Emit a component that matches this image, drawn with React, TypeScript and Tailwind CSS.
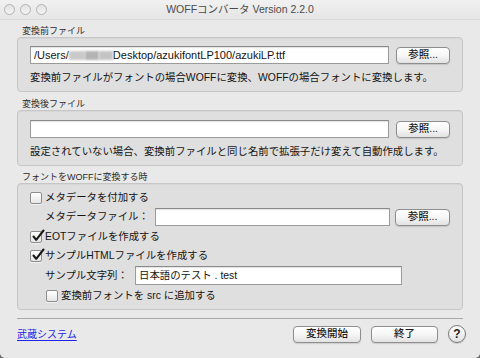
import React from "react";

const font = { fontFamily: '"Liberation Sans", "Noto Sans CJK JP", sans-serif' };

function Check({ checked }: { checked?: boolean }) {
  return (
    <span className="relative inline-block h-[12px] w-[12px] shrink-0 rounded-[2px] border border-[#8c8c8c] bg-gradient-to-b from-white to-[#e6e6e6] shadow-[0_1px_0_rgba(255,255,255,0.6)]">
      {checked ? (
        <svg
          className="absolute -top-[3px] left-[0px]"
          width="14"
          height="14"
          viewBox="0 0 14 14"
        >
          <path
            d="M2.5 7.5 L5.2 10.8 L12.5 1.5"
            fill="none"
            stroke="#1a1a1a"
            strokeWidth="2.1"
            strokeLinecap="round"
            strokeLinejoin="round"
          />
        </svg>
      ) : null}
    </span>
  );
}

function PushButton({ label, className }: { label: string; className?: string }) {
  return (
    <div
      className={
        "flex h-[17px] items-center justify-center rounded-[4px] border border-[#8e8e8e] bg-gradient-to-b from-white via-[#f6f6f6] to-[#e2e2e2] text-[10.5px] font-medium text-[#1b1b1b] shadow-[0_1px_1px_rgba(0,0,0,0.12)] " +
        (className ?? "")
      }
    >
      {label}
    </div>
  );
}

function Field({ children, className }: { children?: React.ReactNode; className?: string }) {
  return (
    <div
      className={
        "flex h-[18px] items-center overflow-hidden border border-[#9b9b9b] border-t-[#8a8a8a] bg-white px-[3px] shadow-[inset_0_1px_1px_rgba(0,0,0,0.12)] " +
        (className ?? "")
      }
    >
      {children}
    </div>
  );
}

function GroupLabel({ text, mt }: { text: string; mt: string }) {
  return (
    <div className={"h-[12px] pl-[5px] text-[9px] leading-[12px] text-[#2a2a2a] " + mt}>{text}</div>
  );
}

function Box({ children, className }: { children: React.ReactNode; className?: string }) {
  return (
    <div
      className={
        "rounded-[4px] border border-[#c6c6c6] bg-[#dfdfdf] px-[12px] shadow-[inset_0_1px_1px_rgba(0,0,0,0.04)] " +
        (className ?? "")
      }
    >
      {children}
    </div>
  );
}

export default function App() {
  return (
    <div className="h-[358px] w-[480px] bg-[#6b6b6b]" style={font}>
      <div className="flex h-[358px] flex-col overflow-hidden rounded-b-[5px] bg-[#e9e9e9] text-[#141414]">
        {/* title bar */}
        <div className="relative flex h-[20px] shrink-0 items-center justify-center border-b border-[#dcdcdc] bg-gradient-to-b from-[#f1f1f1] to-[#e5e5e5]">
          <div className="absolute left-[4px] top-[4px] flex gap-[5px]">
            <span className="h-[11px] w-[11px] rounded-full border border-[#b3b3b3] bg-gradient-to-b from-[#e2e2e2] to-[#f4f4f4]" />
            <span className="h-[11px] w-[11px] rounded-full border border-[#b3b3b3] bg-gradient-to-b from-[#e2e2e2] to-[#f4f4f4]" />
            <span className="h-[11px] w-[11px] rounded-full border border-[#b3b3b3] bg-gradient-to-b from-[#e2e2e2] to-[#f4f4f4]" />
          </div>
          <div className="text-[10.5px] text-[#4b4b4b]">WOFFコンバータ Version 2.2.0</div>
        </div>

        <div className="px-[17px]">
          <GroupLabel text="変換前ファイル" mt="mt-[5px]" />
          <Box className="h-[55px] pt-[8px]">
            <div className="flex items-center gap-[7px]">
              <Field className="w-[361px]">
                <span className="text-[11px] leading-none">/Users/</span>
                <span className="relative inline-flex h-[11px] w-[44px] items-center">
                  <span className="h-[9px] w-[16px] bg-[#c9c9c9] blur-[1px]" />
                  <span className="h-[9px] w-[14px] bg-[#b3b3b3] blur-[1px]" />
                  <span className="h-[9px] w-[14px] bg-[#c4c4c4] blur-[1px]" />
                </span>
                <span className="text-[11px] leading-none">Desktop/azukifontLP100/azukiLP.ttf</span>
              </Field>
              <PushButton label="参照..." className="w-[54px]" />
            </div>
            <div className="mt-[8px] text-[10.4px] leading-[12px]">
              変換前ファイルがフォントの場合WOFFに変換、WOFFの場合フォントに変換します。
            </div>
          </Box>

          <GroupLabel text="変換後ファイル" mt="mt-[6px]" />
          <Box className="h-[56px] pt-[9px]">
            <div className="flex items-center gap-[7px]">
              <Field className="w-[361px]" />
              <PushButton label="参照..." className="w-[54px]" />
            </div>
            <div className="mt-[8px] text-[10.4px] leading-[12px]">
              設定されていない場合、変換前ファイルと同じ名前で拡張子だけ変えて自動作成します。
            </div>
          </Box>

          <GroupLabel text="フォントをWOFFに変換する時" mt="mt-[5px]" />
          <Box className="h-[127px] pt-[6px]">
            <div className="flex h-[16px] items-center gap-[3px] text-[10.4px]">
              <Check />
              <span>メタデータを付加する</span>
            </div>
            <div className="ml-[15px] mt-[2px] flex h-[18px] items-center text-[10.4px]">
              <span className="w-[110px]">メタデータファイル：</span>
              <Field className="w-[236px]" />
              <PushButton label="参照..." className="ml-[5px] w-[55px]" />
            </div>
            <div className="mt-[3px] flex h-[16px] items-center gap-[3px] text-[10.4px]">
              <Check checked />
              <span>EOTファイルを作成する</span>
            </div>
            <div className="mt-[3px] flex h-[16px] items-center gap-[3px] text-[10.4px]">
              <Check checked />
              <span>サンプルHTMLファイルを作成する</span>
            </div>
            <div className="ml-[15px] mt-[2px] flex h-[19px] items-center text-[10.4px]">
              <span className="w-[90px]">サンプル文字列：</span>
              <Field className="h-[19px] w-[267px]">
                <span className="text-[10.4px]">日本語のテスト . test</span>
              </Field>
            </div>
            <div className="ml-[16px] mt-[3px] flex h-[16px] items-center gap-[3px] text-[10.4px]">
              <Check />
              <span>変換前フォントを src に追加する</span>
            </div>
          </Box>

          <div className="mt-[8px] h-px bg-[#a9a9a9]" />

          <div className="-mr-[3px] mt-[6px] flex h-[18px] items-center">
            <span className="text-[10px] text-[#2323e8] underline underline-offset-[2px]">武蔵システム</span>
            <div className="flex-1" />
            <PushButton label="変換開始" className="w-[68px]" />
            <PushButton label="終了" className="ml-[10px] w-[67px]" />
            <div className="ml-[10px] flex h-[18px] w-[18px] items-center justify-center rounded-full border border-[#7a7a7a] bg-gradient-to-b from-white to-[#e2e2e2] text-[12px] font-bold text-[#222] shadow-[0_1px_1px_rgba(0,0,0,0.15)]">
              ?
            </div>
          </div>
        </div>
      </div>
    </div>
  );
}
